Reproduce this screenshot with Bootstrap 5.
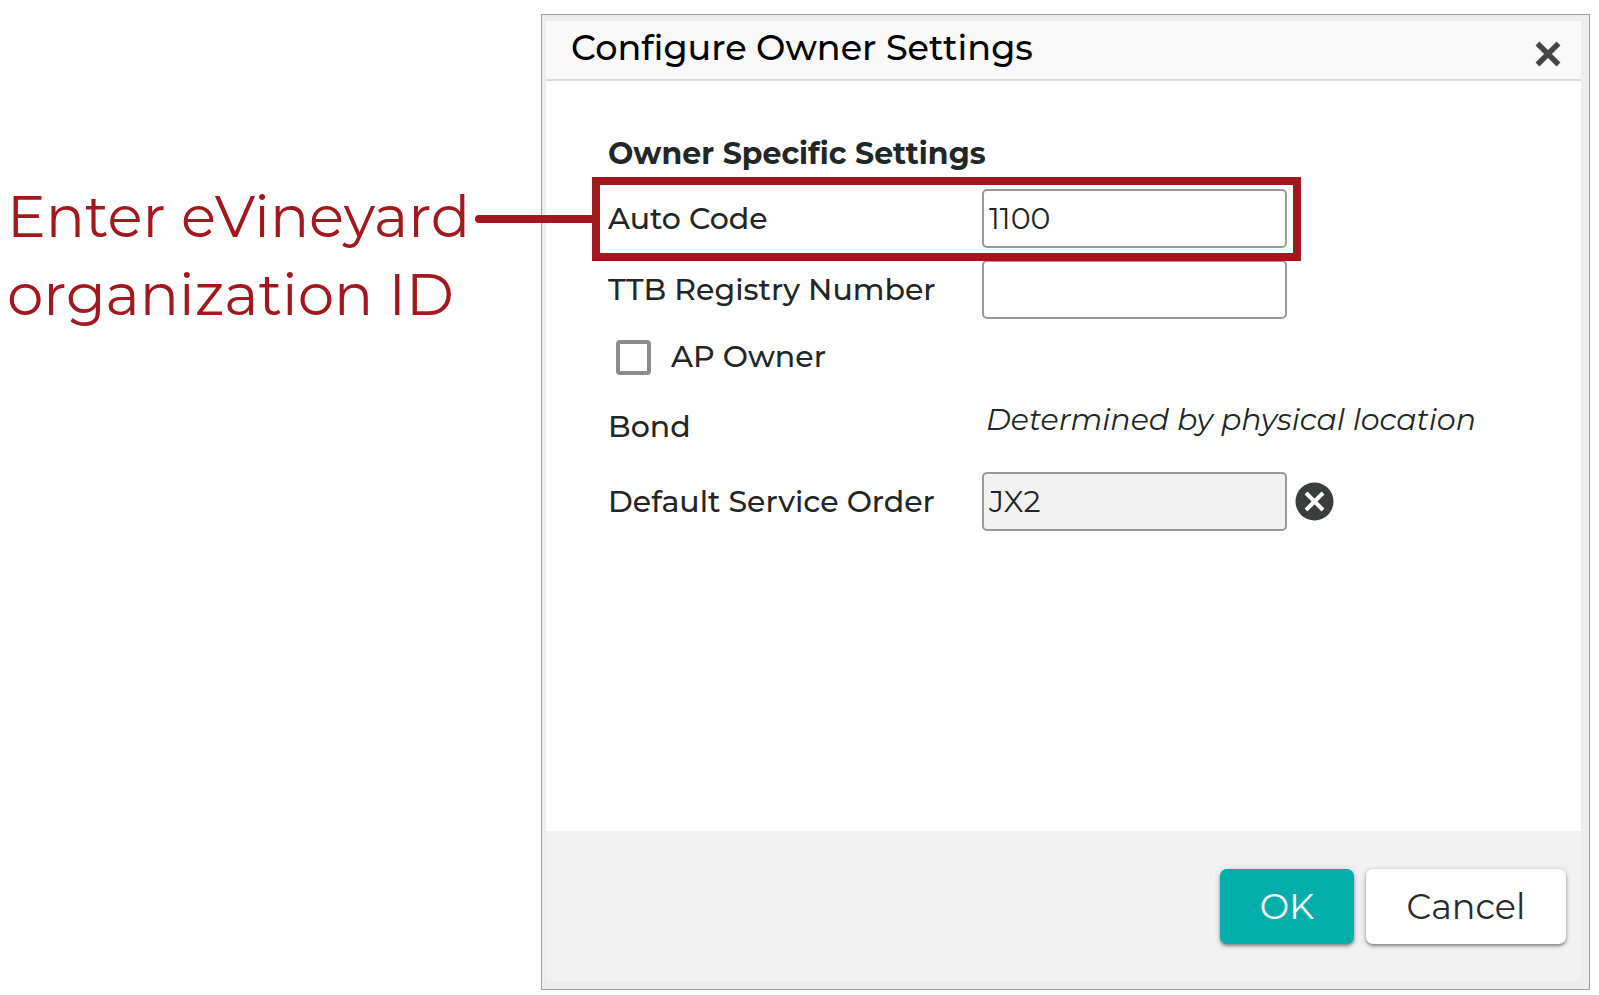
<!DOCTYPE html>
<html lang="en">
<head>
<meta charset="utf-8">
<meta name="viewport" content="width=device-width, initial-scale=1">
<title>Configure Owner Settings</title>
<link rel="stylesheet" href="https://cdn.jsdelivr.net/npm/bootstrap@5.3.0/dist/css/bootstrap.min.css">
<style>
  :root { --callout: #a1181f; --ink: #222626; --line: #999; }
  body { font-family: Montserrat, Inter, sans-serif; color: var(--ink); background: #fff; font-size: 30px; line-height: 36px; font-weight: 500; }
  .stage { display: grid; grid-template-columns: minmax(0, 541fr) minmax(0, 1049fr); padding: 14px 9px 5px 0; }
  .callout-text { color: var(--callout); font-size: 58px; line-height: 78px; font-weight: 400; padding: 164px 0 0 7px; white-space: nowrap; }
  .dialog { border: 1px solid #a0a0a0; background: #ededed; padding: 6px 8px 8px 4px; }
  .dialog-head { background: #f9f9f9; border-bottom: 2px solid #dcdcdc; height: 60px; padding: 0 19px 4px 25px; }
  .dialog-head h1 { font-size: 35px; line-height: 48px; font-weight: 500; color: #000; }
  .icon-btn { border: 0; background: none; padding: 0; line-height: 0; }
  .icon-btn-close { padding-top: 11px; }
  .dialog-main { background: #fff; padding: 55px 62px; }
  .dialog-main h2 { font-size: 30px; line-height: 36px; font-weight: 700; margin-bottom: 17px; }
  .field { display: flex; align-items: center; margin-bottom: 12px; }
  .field-name { flex: 0 0 374px; white-space: nowrap; }
  .field .form-control { flex: 0 0 305px; width: 305px; height: 59px; border: 2px solid var(--line); border-radius: 5px; padding: 0 5px; font-size: 30px; font-weight: 400; color: var(--ink); }
  .field .form-control[readonly] { background: #f2f2f2; }
  .marked { position: relative; width: 679px; }
  .marked::before { content: ""; position: absolute; inset: -12px -14px -13px -16px; border: 8px solid var(--callout); pointer-events: none; z-index: 1; }
  .marked::after { content: ""; position: absolute; left: -133px; top: 26px; width: 120px; height: 8px; border-radius: 4px 0 0 4px; background: var(--callout); }
  .check-row { height: 52px; padding-left: 8px; gap: 20px; }
  .check-row .form-check-input { width: 35px; height: 35px; margin: 0; border: 4px solid #8c8c8c; border-radius: 4px; }
  .bond-row { height: 63px; margin-bottom: 14px; }
  .bond-value { padding: 0 0 14px 4px; font-weight: 400; white-space: nowrap; }
  .dialog-foot { background: #f2f2f2; height: 150px; padding: 38px 15px; gap: 12px; }
  .dialog-foot .btn { height: 75px; border: 0; border-radius: 7px; padding: 8px 0 6px; font-size: 35px; font-weight: 400; box-shadow: 0 2px 3px rgba(0,0,0,.35), 0 1px 6px rgba(0,0,0,.2); }
  .btn-ok, .btn-ok:hover { width: 134px; background: #02adaa; color: #fff; }
  .btn-cancel, .btn-cancel:hover { width: 200px; background: #fff; color: #2b2b2e; }
</style>
</head>
<body>
<div class="stage min-vh-100">
  <p class="callout-text m-0">Enter eVineyard<br>organization ID</p>
  <section class="dialog d-flex flex-column" role="dialog" aria-labelledby="dlg-title">
    <header class="dialog-head d-flex justify-content-between align-items-center">
      <h1 id="dlg-title" class="m-0 text-nowrap">Configure Owner Settings</h1>
      <button type="button" class="icon-btn icon-btn-close" aria-label="Close">
        <svg width="28" height="28" viewBox="0 0 28 28"><path d="M3.500 3.500 24.500 24.500M24.500 3.500 3.500 24.500" stroke="#444746" stroke-width="5.500" fill="none"/></svg>
      </button>
    </header>
    <form id="owner-form" class="dialog-main flex-grow-1">
      <h2>Owner Specific Settings</h2>
      <div class="field marked">
        <label class="field-name" for="auto-code">Auto Code</label>
        <input class="form-control" id="auto-code" type="text" value="1100">
      </div>
      <div class="field">
        <label class="field-name" for="ttb">TTB Registry Number</label>
        <input class="form-control" id="ttb" type="text">
      </div>
      <div class="field check-row">
        <input class="form-check-input" id="ap-owner" type="checkbox">
        <label for="ap-owner">AP Owner</label>
      </div>
      <div class="field bond-row">
        <span class="field-name">Bond</span>
        <em class="bond-value">Determined by physical location</em>
      </div>
      <div class="field">
        <label class="field-name" for="service">Default Service Order</label>
        <input class="form-control" id="service" type="text" value="JX2" readonly>
        <button type="button" class="icon-btn ms-2" aria-label="Clear service order">
          <svg width="39" height="39" viewBox="0 0 39 39"><circle cx="19.500" cy="19.500" r="19" fill="#3b3d3d"/><path d="M11 11 28 28M28 11 11 28" stroke="#fff" stroke-width="4" fill="none"/></svg>
        </button>
      </div>
    </form>
    <footer class="dialog-foot d-flex justify-content-end">
      <button type="submit" form="owner-form" class="btn btn-ok">OK</button>
      <button type="button" class="btn btn-cancel">Cancel</button>
    </footer>
  </section>
</div>
<script src="https://cdn.jsdelivr.net/npm/bootstrap@5.3.0/dist/js/bootstrap.bundle.min.js"></script>
</body>
</html>
